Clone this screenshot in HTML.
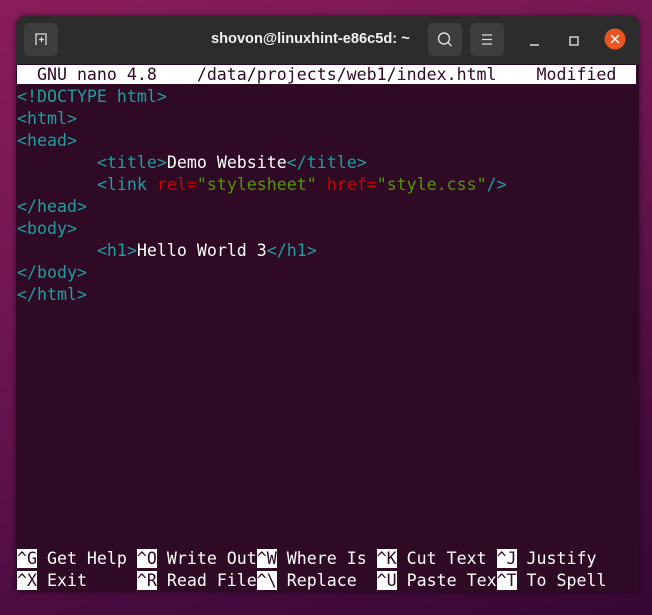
<!DOCTYPE html>
<html><head><style>
body{margin:0;width:652px;height:615px;overflow:hidden;background:linear-gradient(160deg,#8a1d5a 0%,#6d1650 40%,#4a0c40 75%,#360734 100%);position:relative;font-family:"Liberation Sans",sans-serif}
.win{position:absolute;left:16px;top:16px;width:623px;height:576px;background:#2f0a24;border-radius:10px 10px 0 0;overflow:hidden;box-shadow:0 0 6px rgba(0,0,0,.5)}
.tb{position:absolute;left:0;top:0;width:623px;height:48px;background:#2c2c2c}
.btn{position:absolute;top:7px;width:34px;height:33px;background:#3d3d3d;border-radius:5px}
.title{position:absolute;left:195px;top:15px;color:#f0f0f0;font-weight:bold;font-size:14.6px;white-space:nowrap}
pre{position:absolute;left:1px;top:48px;margin:0;font-family:"DejaVu Sans Mono",monospace;font-size:16.6px;line-height:22px;color:#fff;letter-spacing:0}
.c{color:#1aa0a2}.r{color:#cc0000}.g{color:#4e9a06}
.inv{background:#fff;color:#300a24}
</style></head><body>
<div class="win">
<div class="tb">
<div class="btn" style="left:8px"><svg width="34" height="33"><path d="M12 22V11h10v11M15 16.5h5M17.5 14v5" stroke="#ddd" stroke-width="1.3" fill="none"/></svg></div>
<div class="title">shovon@linuxhint-e86c5d: ~</div>
<div class="btn" style="left:412px"><svg width="34" height="33"><circle cx="16" cy="15.5" r="5.5" stroke="#ddd" stroke-width="1.4" fill="none"/><path d="M20 19.5l3.5 3.5" stroke="#ddd" stroke-width="1.4"/></svg></div>
<div class="btn" style="left:454px"><svg width="34" height="33"><path d="M12 12h10M12 16.5h10M12 21h10" stroke="#ddd" stroke-width="1.3"/></svg></div>
<svg style="position:absolute;left:500px;top:12px" width="120" height="26"><path d="M14 17h9" stroke="#ddd" stroke-width="1.5"/><rect x="54" y="9" width="8" height="8" stroke="#ddd" stroke-width="1.4" fill="none"/><circle cx="99" cy="11" r="10.5" fill="#e95420"/><path d="M95 7l8 8M103 7l-8 8" stroke="#fff" stroke-width="1.5"/></svg>
</div>
<pre><span class="inv">  GNU nano 4.8    /data/projects/web1/index.html    Modified  </span>
<span class="c">&lt;!DOCTYPE html&gt;</span>
<span class="c">&lt;html&gt;</span>
<span class="c">&lt;head&gt;</span>
        <span class="c">&lt;title&gt;</span>Demo Website<span class="c">&lt;/title&gt;</span>
        <span class="c">&lt;link </span><span class="r">rel=</span><span class="g">"stylesheet"</span> <span class="r">href=</span><span class="g">"style.css"</span><span class="c">/&gt;</span>
<span class="c">&lt;/head&gt;</span>
<span class="c">&lt;body&gt;</span>
        <span class="c">&lt;h1&gt;</span>Hello World 3<span class="c">&lt;/h1&gt;</span>
<span class="c">&lt;/body&gt;</span>
<span class="c">&lt;/html&gt;</span>











<span class="inv">^G</span> Get Help <span class="inv">^O</span> Write Out<span class="inv">^W</span> Where Is <span class="inv">^K</span> Cut Text <span class="inv">^J</span> Justify
<span class="inv">^X</span> Exit     <span class="inv">^R</span> Read File<span class="inv">^\</span> Replace  <span class="inv">^U</span> Paste Tex<span class="inv">^T</span> To Spell</pre>
</div>
</body></html>
